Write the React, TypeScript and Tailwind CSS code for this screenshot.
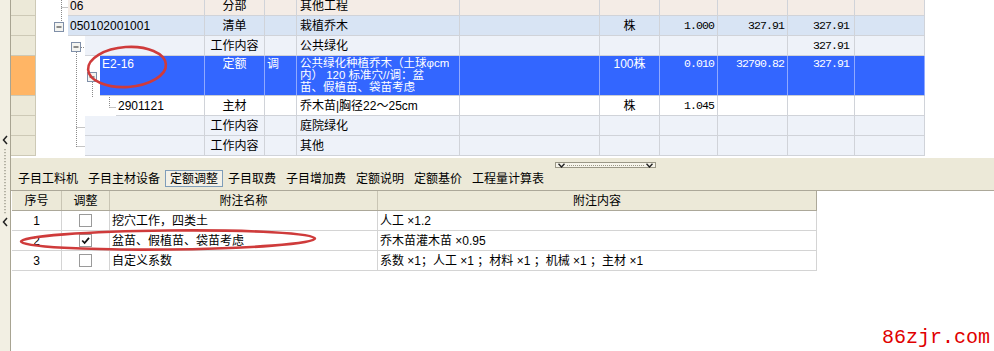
import React from "react";

type Row = {
  h: string;
  indent: string;
  treeW: string;
  code: string;
  type: string;
  adj?: string;
  name: string[];
  unit?: string;
  qty?: string;
  price?: string;
  total?: string;
  bg: string;
  selected?: boolean;
};

const rows: Row[] = [
  { h: "h-[20px]", indent: "w-[32px]", treeW: "w-[137px]", code: "06", type: "分部", name: ["其他工程"], bg: "bg-[#F4ECE6]" },
  {
    h: "h-[20px]",
    indent: "w-[32px]",
    treeW: "w-[137px]",
    code: "050102001001",
    type: "清单",
    name: ["栽植乔木"],
    unit: "株",
    qty: "1.000",
    price: "327.91",
    total: "327.91",
    bg: "bg-[#D8E4F4]",
  },
  { h: "h-[20px]", indent: "w-[49px]", treeW: "w-[120px]", code: "", type: "工作内容", name: ["公共绿化"], total: "327.91", bg: "bg-[#EEF2F9]" },
  {
    h: "h-[40px]",
    indent: "w-[64px]",
    treeW: "w-[105px]",
    code: "E2-16",
    type: "定额",
    adj: "调",
    name: ["公共绿化种植乔木（土球φcm", "内） 120 标准穴//调：盆", "苗、假植苗、袋苗考虑"],
    unit: "100株",
    qty: "0.010",
    price: "32790.82",
    total: "327.91",
    bg: "bg-[#3366FF]",
    selected: true,
  },
  { h: "h-[20px]", indent: "w-[80px]", treeW: "w-[89px]", code: "2901121", type: "主材", name: ["乔木苗|胸径22～25cm"], unit: "株", qty: "1.045", bg: "bg-white" },
  { h: "h-[20px]", indent: "w-[49px]", treeW: "w-[120px]", code: "", type: "工作内容", name: ["庭院绿化"], bg: "bg-[#EEF2F9]" },
  { h: "h-[20px]", indent: "w-[49px]", treeW: "w-[120px]", code: "", type: "工作内容", name: ["其他"], bg: "bg-[#EEF2F9]" },
];

const notes = [
  { no: "1", checked: false, name: "挖穴工作，四类土", content: "人工 ×1.2" },
  { no: "2", checked: true, name: "盆苗、假植苗、袋苗考虑", content: "乔木苗灌木苗 ×0.95" },
  { no: "3", checked: false, name: "自定义系数", content: "系数 ×1；人工 ×1 ；材料 ×1 ；机械 ×1 ；主材 ×1" },
];

const tabs = ["子目工料机", "子目主材设备", "定额调整", "子目取费", "子目增加费", "定额说明", "定额基价", "工程量计算表"];

const num = "font-['Liberation_Mono',monospace] text-[11.5px] tracking-[-0.9px]";

function GridRow({ r, header }: { r: Row; header: string }) {
  const line = r.selected ? "border-r-[#90A9FF] border-b-[#C9CDD6]" : "border-[#D0D3D9]";
  const al = r.selected ? "items-start pt-[1px]" : "items-center";
  const txt = r.selected ? "text-white" : "text-black";
  const cell = `shrink-0 h-full flex border-r border-b ${line} ${al}`;
  return (
    <div className={`flex ${r.h}`}>
      <div className={`w-[25px] shrink-0 h-full border-r border-b border-[#CDC9B6] ${header}`} />
      <div className={`${r.indent} shrink-0 h-full bg-white`} />
      <div className={`flex h-full ${r.bg} ${txt}`}>
        <div className={`${cell} ${r.treeW} pl-[2px] text-[12px]`}>{r.code}</div>
        <div className={`${cell} w-[60px] justify-center`}>{r.type}</div>
        <div className={`${cell} w-[32px] pl-[2px]`}>{r.adj}</div>
        <div
          className={`shrink-0 h-full w-[163px] pl-[3px] flex flex-col items-start border-r border-b ${line} ${
            r.selected ? "justify-start pt-[1px]" : "justify-center"
          }`}
        >
          {r.name.map((l) => (
            <div key={l} className={r.selected ? "h-[12px] leading-[12px] text-[11.5px] whitespace-nowrap overflow-hidden" : "whitespace-nowrap"}>
              {l}
            </div>
          ))}
        </div>
        <div className={`${cell} w-[140px]`} />
        <div className={`${cell} w-[60px] justify-center`}>{r.unit}</div>
        <div className={`${cell} w-[58px] justify-end pr-[3px] ${num}`}>{r.qty}</div>
        <div className={`${cell} w-[70px] justify-end pr-[3px] ${num}`}>{r.price}</div>
        <div className={`${cell} w-[67px] justify-end pr-[5px] ${num}`}>{r.total}</div>
        <div className={`${cell} w-[70px]`} />
      </div>
    </div>
  );
}

function Chevron() {
  return (
    <svg width="7" height="5" viewBox="0 0 7 5">
      <path d="M0.5 0.8 L3.5 4 L6.5 0.8" fill="none" stroke="#222" strokeWidth="1.4" />
    </svg>
  );
}

export default function App() {
  return (
    <div className="relative w-[994px] h-[351px] overflow-hidden bg-white flex text-[12px] leading-[14px] text-black font-['Liberation_Sans','Noto_Sans_CJK_SC',sans-serif]">
      {/* left splitter strip */}
      <div className="w-[11px] shrink-0 h-full bg-[#F2EFE3] border-r border-[#A8A492]">
        <svg width="10" height="351" viewBox="0 0 10 351">
          <path d="M7 136 L3.5 140 L7 144" fill="none" stroke="#222" strokeWidth="1.5" />
          <line x1="5" y1="149" x2="5" y2="215" stroke="#8C8A7C" strokeWidth="1.2" strokeDasharray="1.2 1.8" />
          <path d="M7 218 L3.5 222 L7 226" fill="none" stroke="#222" strokeWidth="1.5" />
        </svg>
      </div>

      <div className="flex-1 flex flex-col min-w-0">
        {/* upper grid */}
        <div className="h-[158px] shrink-0 overflow-hidden">
          <div className="-mt-[4px]">
            {rows.map((r, i) => (
              <GridRow key={i} r={r} header={i === 3 ? "bg-[#FFB565]" : "bg-[#ECE9D8]"} />
            ))}
          </div>
        </div>

        {/* tab band */}
        <div className="h-[33px] shrink-0 bg-[#ECE9D8] border-b border-[#ACA899] flex flex-col">
          <div className="pt-[4px] pl-[544px] h-[10px]">
            <div className="w-[101px] h-[6px] border border-[#9A9786] bg-[#F6F4EA] flex items-center justify-between px-[2px]">
              <Chevron />
              <div className="flex-1 mx-[2px] border-t border-dotted border-[#9A9786]" />
              <Chevron />
            </div>
          </div>
          <div className="flex pl-[2px] mt-[2px]">
            {tabs.map((t) => (
              <div
                key={t}
                className={`h-[17px] px-[4px] flex items-center border ${
                  t === "定额调整" ? "border-[#7F9DB9] bg-[#F3F1E8]" : "border-transparent"
                }`}
              >
                {t}
              </div>
            ))}
          </div>
        </div>

        {/* lower grid */}
        <div className="ml-[1px] w-[805px]">
          <div className="flex h-[20px] bg-[#ECE9D8] border-b border-[#ACA899]">
            <div className="w-[50px] shrink-0 border-r border-[#C9C5B4] flex items-center justify-center">序号</div>
            <div className="w-[48px] shrink-0 border-r border-[#C9C5B4] flex items-center justify-center">调整</div>
            <div className="w-[268px] shrink-0 border-r border-[#C9C5B4] flex items-center justify-center">附注名称</div>
            <div className="w-[439px] shrink-0 border-r border-[#ACA899] flex items-center justify-center">附注内容</div>
          </div>
          {notes.map((n) => (
            <div key={n.no} className="flex h-[20px] border-b border-[#D4D4D4]">
              <div className="w-[50px] shrink-0 border-r border-[#D4D4D4] flex items-center justify-center">{n.no}</div>
              <div className="w-[48px] shrink-0 border-r border-[#D4D4D4] flex items-center justify-center">
                <div className="w-[13px] h-[13px] border border-[#9A9A9A] bg-white flex items-center justify-center">
                  {n.checked && (
                    <svg width="9" height="9" viewBox="0 0 9 9">
                      <path d="M1.2 4.5 L3.6 7 L8 1.8" fill="none" stroke="#111" strokeWidth="1.8" />
                    </svg>
                  )}
                </div>
              </div>
              <div className="w-[268px] shrink-0 border-r border-[#D4D4D4] flex items-center pl-[2px]">{n.name}</div>
              <div className="w-[439px] shrink-0 border-r border-[#D4D4D4] flex items-center pl-[2px]">{n.content}</div>
            </div>
          ))}
        </div>
      </div>

      {/* tree lines and red annotations */}
      <svg className="absolute left-0 top-0 pointer-events-none" width="994" height="351" viewBox="0 0 994 351">
        <g stroke="#8A8A8A" strokeWidth="1" strokeDasharray="1 1" fill="none">
          <line x1="61.5" y1="0" x2="61.5" y2="22" />
          <line x1="61.5" y1="7.5" x2="68" y2="7.5" />
          <line x1="76.5" y1="52" x2="76.5" y2="147" />
          <line x1="81" y1="47.5" x2="85" y2="47.5" />
          <line x1="76.5" y1="127.5" x2="85" y2="127.5" />
          <line x1="76.5" y1="146.5" x2="85" y2="146.5" />
          <line x1="92.5" y1="82" x2="92.5" y2="97" />
          <line x1="109.5" y1="97" x2="109.5" y2="107.5" />
          <line x1="109.5" y1="107.5" x2="116" y2="107.5" />
        </g>
        <g fill="#F4F4F0" stroke="#7F8FA8">
          <rect x="54.5" y="22.5" width="9" height="9" />
          <rect x="71.5" y="42.5" width="9" height="9" />
          <rect x="87.5" y="72.5" width="9" height="9" />
        </g>
        <g stroke="#222" strokeWidth="1">
          <line x1="56.5" y1="27" x2="61.5" y2="27" />
          <line x1="73.5" y1="47" x2="78.5" y2="47" />
          <line x1="89.5" y1="77" x2="94.5" y2="77" />
        </g>
        <ellipse cx="127" cy="67" rx="39" ry="20" transform="rotate(-4 127 67)" fill="none" stroke="#CF3B3B" strokeWidth="2.6" />
        <ellipse cx="168" cy="240" rx="147" ry="9.5" transform="rotate(-0.6 168 240)" fill="none" stroke="#CF3B3B" strokeWidth="2.6" />
      </svg>

      <div className="absolute right-[4px] bottom-[2px] text-[20px] leading-[22px] text-[#E00000] font-['Liberation_Mono',monospace]">
        86zjr.com
      </div>
    </div>
  );
}
